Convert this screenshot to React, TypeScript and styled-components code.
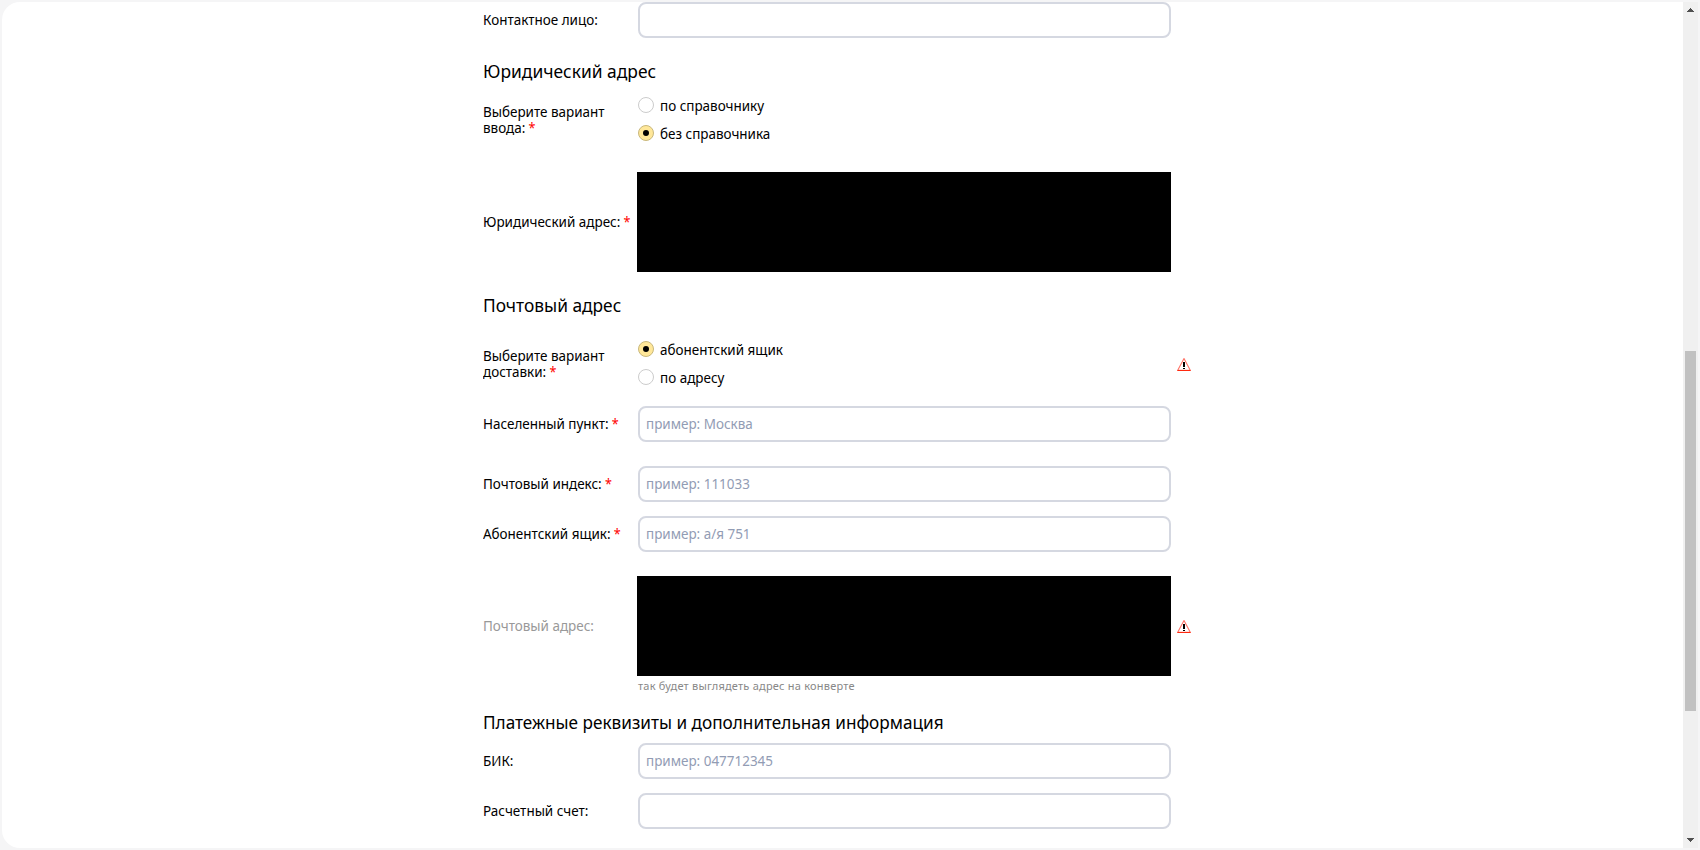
import React from "react";
import styled, { createGlobalStyle } from "styled-components";

const GlobalStyle = createGlobalStyle`
  * { box-sizing: border-box; }
  html, body { margin: 0; height: 100%; background: #f5f5f6; overflow: hidden; }
  body { font-family: "Noto Sans", "Open Sans", sans-serif; font-size: 15px; line-height: 16px; color: #000; }
`;

const Frame = styled.div`
  height: 850px;
  padding: 2px;
`;

const Panel = styled.main`
  display: flex;
  justify-content: space-between;
  height: 846px;
  background: #fff;
  border-radius: 18px 0 0 18px;
  overflow: hidden;
`;

const Form = styled.form`
  width: 730px;
  margin-left: 481px;
`;

const Row = styled.div<{ $top?: number; $height?: number }>`
  display: grid;
  grid-template-columns: 154px 534px 20px;
  align-items: center;
  margin-top: ${(p) => p.$top ?? 0}px;
  height: ${(p) => p.$height ?? 36}px;
`;

/* Narrows the body face horizontally for labels, options and placeholders. */
const Condensed = styled.span<{ $x?: number }>`
  display: block;
  width: max-content;
  white-space: nowrap;
  transform: scaleX(${(p) => p.$x ?? 0.897});
  transform-origin: 0 50%;
`;

const Label = styled.label<{ $muted?: boolean; $tall?: boolean }>`
  color: ${(p) => (p.$muted ? "#999" : "#000")};
  width: 150px;
  margin-left: -0.4px;
  padding-bottom: ${(p) => (p.$tall ? 0 : 2)}px;
`;

const Star = styled.span`
  color: #f00;
  font-size: 14px;
`;

const Heading = styled.h2<{ $top: number }>`
  margin: ${(p) => p.$top}px 0 0 -0.4px;
  font-size: 18px;
  font-weight: 400;
  line-height: 24px;
  height: 24px;
`;

const Field = styled.div`
  display: flex;
  align-items: center;
  margin-left: 1px;
  width: 533px;
  height: 36px;
  padding: 0 5.6px 2px;
  border: 2px solid #d5d8e1;
  border-radius: 8px;
  background: #fff;
  color: #929cb4;
`;

const Redacted = styled.div`
  height: 100px;
  background: #000;
`;

const Options = styled.div`
  display: flex;
  flex-direction: column;
  padding-left: 1px;
`;

const Option = styled.label`
  display: flex;
  align-items: center;
  gap: 5.6px;
  height: 28px;
`;

const Dot = styled.span<{ $on?: boolean }>`
  display: grid;
  place-items: center;
  width: 16px;
  height: 16px;
  border-radius: 50%;
  border: 1px solid ${(p) => (p.$on ? "#c9b87c" : "#ccc")};
  background: ${(p) => (p.$on ? "#ffe799" : "#fff")};
  &::after {
    content: "";
    width: 6px;
    height: 6px;
    border-radius: 50%;
    background: ${(p) => (p.$on ? "#000" : "transparent")};
  }
`;

const Hint = styled.div`
  margin: 2px 0 0 155px;
  height: 16px;
  font-size: 11px;
  color: #888;
  letter-spacing: 0.22px;
`;

const WarnIcon = styled.svg<{ $shift: number }>`
  display: block;
  margin: ${(p) => p.$shift}px 0 0 6px;
`;

const Scrollbar = styled.div`
  display: flex;
  flex-direction: column;
  align-items: center;
  width: 15px;
  padding: 6px 0;
  background: #f0f0f0;
`;

const Thumb = styled.div`
  width: 11px;
  height: 360px;
  margin: 339px 0 127px;
  background: #c1c1c1;
`;

const Arrow = ({ down }: { down?: boolean }) => (
  <svg width="7" height="4" viewBox="0 0 7 4" shapeRendering="crispEdges">
    <path
      d={down ? "M0 0h7v1H0zM1 1h5v1H1zM2 2h3v1H2zM3 3h1v1H3z" : "M3 0h1v1H3zM2 1h3v1H2zM1 2h5v1H1zM0 3h7v1H0z"}
      fill="#505050"
    />
  </svg>
);

const Warning = ({ shift }: { shift: number }) => (
  <WarnIcon $shift={shift} width="14" height="13" viewBox="0 0 14 13">
    <path d="M7 0.6 L13.4 12.4 H0.6 Z" fill="#fff" stroke="#ff7468" strokeWidth="1.1" strokeLinejoin="round" />
    <path d="M0.5 12.5H13.5" stroke="#ff2a10" />
    <path d="M6 4h2v5h-2zM6 10h2v1h-2z" fill="#000" />
  </WarnIcon>
);

const Req = () => <Star> *</Star>;

export default function App() {
  return (
    <>
      <GlobalStyle />
      <Frame>
        <Panel>
          <Form>
            <Row>
              <Label><Condensed>Контактное лицо:</Condensed></Label>
              <Field />
            </Row>
            <Heading $top={21}><Condensed $x={0.968}>Юридический адрес</Condensed></Heading>
            <Row $top={8} $height={56}>
              <Label $tall>
                <Condensed>Выберите вариант</Condensed>
                <Condensed>ввода:<Req /></Condensed>
              </Label>
              <Options>
                <Option><Dot /><Condensed>по справочнику</Condensed></Option>
                <Option><Dot $on /><Condensed>без справочника</Condensed></Option>
              </Options>
            </Row>
            <Row $top={25} $height={100}>
              <Label><Condensed>Юридический адрес:<Req /></Condensed></Label>
              <Redacted />
            </Row>
            <Heading $top={21}><Condensed $x={0.963}>Почтовый адрес</Condensed></Heading>
            <Row $top={18} $height={56}>
              <Label $tall>
                <Condensed>Выберите вариант</Condensed>
                <Condensed>доставки:<Req /></Condensed>
              </Label>
              <Options>
                <Option><Dot $on /><Condensed>абонентский ящик</Condensed></Option>
                <Option><Dot /><Condensed>по адресу</Condensed></Option>
              </Options>
              <Warning shift={3} />
            </Row>
            <Row $top={15}>
              <Label><Condensed>Населенный пункт:<Req /></Condensed></Label>
              <Field><Condensed>пример: Москва</Condensed></Field>
            </Row>
            <Row $top={24}>
              <Label><Condensed>Почтовый индекс:<Req /></Condensed></Label>
              <Field><Condensed>пример: 111033</Condensed></Field>
            </Row>
            <Row $top={14}>
              <Label><Condensed>Абонентский ящик:<Req /></Condensed></Label>
              <Field><Condensed>пример: а/я 751</Condensed></Field>
            </Row>
            <Row $top={24} $height={100}>
              <Label $muted><Condensed>Почтовый адрес:</Condensed></Label>
              <Redacted />
              <Warning shift={1} />
            </Row>
            <Hint>так будет выглядеть адрес на конверте</Hint>
            <Heading $top={16}>
              <Condensed $x={0.954}>Платежные реквизиты и дополнительная информация</Condensed>
            </Heading>
            <Row $top={9}>
              <Label><Condensed>БИК:</Condensed></Label>
              <Field><Condensed>пример: 047712345</Condensed></Field>
            </Row>
            <Row $top={14}>
              <Label><Condensed>Расчетный счет:</Condensed></Label>
              <Field />
            </Row>
          </Form>
          <Scrollbar>
            <Arrow />
            <Thumb />
            <Arrow down />
          </Scrollbar>
        </Panel>
      </Frame>
    </>
  );
}
